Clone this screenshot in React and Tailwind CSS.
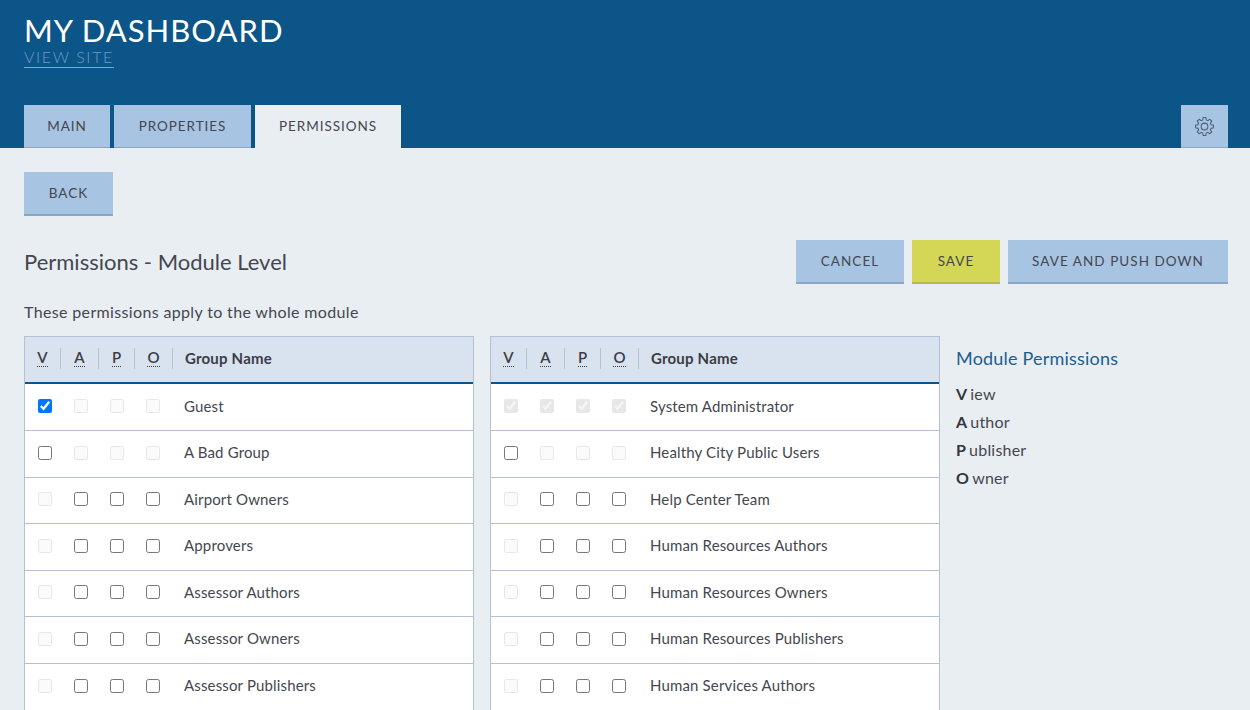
import React from "react";

const left = [
  { name: "Guest", v: true, locked: "apo" },
  { name: "A Bad Group", locked: "apo" },
  { name: "Airport Owners", locked: "v" },
  { name: "Approvers", locked: "v" },
  { name: "Assessor Authors", locked: "v" },
  { name: "Assessor Owners", locked: "v" },
  { name: "Assessor Publishers", locked: "v" },
];

const right = [
  { name: "System Administrator", all: true },
  { name: "Healthy City Public Users", locked: "apo" },
  { name: "Help Center Team", locked: "v" },
  { name: "Human Resources Authors", locked: "v" },
  { name: "Human Resources Owners", locked: "v" },
  { name: "Human Resources Publishers", locked: "v" },
  { name: "Human Services Authors", locked: "v" },
];

const Gear = () => (
  <svg width="21" height="21" viewBox="0 0 20 20" fill="none" stroke="#4a5f78" strokeWidth="1">
    <circle cx="10" cy="10" r="3.2" />
    <path d="M8.7 1.5h2.6l.4 2.3 1.5.6 1.9-1.3 1.8 1.8-1.3 1.9.6 1.5 2.3.4v2.6l-2.3.4-.6 1.5 1.3 1.9-1.8 1.8-1.9-1.3-1.5.6-.4 2.3H8.7l-.4-2.3-1.5-.6-1.9 1.3-1.8-1.8 1.3-1.9-.6-1.5-2.3-.4V8.7l2.3-.4.6-1.5-1.3-1.9 1.8-1.8 1.9 1.3 1.5-.6z" strokeLinejoin="round" />
  </svg>
);

const Button = ({ children, className }) => (
  <button className={`h-11 flex items-center justify-center text-[13.5px] tracking-[1.05px] text-[#44474f] border-b-2 ${className}`}>
    {children}
  </button>
);

const Tab = ({ children, className }) => (
  <div className={`h-[43px] flex items-center justify-center text-[13.5px] tracking-[0.95px] text-[#44474f] ${className}`}>
    {children}
  </div>
);

const Head = ({ children, className }) => (
  <div className={`flex items-center justify-center h-[21px] border-r border-[#b4c3d4] ${className}`}>
    <span className="font-semibold text-[15px] leading-[17px] text-[#3a3d44] border-b border-dotted border-[#3a3d44]">{children}</span>
  </div>
);

const Box = ({ checked, disabled }) => (
  <div className="w-9 flex justify-center">
    <input type="checkbox" readOnly checked={!!checked} disabled={!!disabled} className="w-[14px] h-[14px] disabled:opacity-50" />
  </div>
);

const Row = ({ row }) => {
  const locked = row.locked || "";
  return (
    <div className="h-[46.5px] flex items-center bg-white border-b last:border-b-0 border-[#b1c1d3] pl-[2px] pb-[2px]">
      <Box checked={row.v || row.all} disabled={row.all || locked.includes("v")} />
      <Box checked={row.all} disabled={row.all || locked.includes("a")} />
      <Box checked={row.all} disabled={row.all || locked.includes("p")} />
      <Box checked={row.all} disabled={row.all || locked.includes("o")} />
      <span className="ml-[13px] -mt-[1px] text-[15px] tracking-[0.15px] text-[#44474f]">{row.name}</span>
    </div>
  );
};

const Table = ({ rows }) => (
  <div className="w-[450px] border-x border-t border-[#b1c1d3]">
    <div className="h-[47px] flex items-center bg-[#d9e3ef] border-b-2 border-[#0b5588] pb-[3px]">
      <Head className="w-9">V</Head>
      <Head className="w-[38px]">A</Head>
      <Head className="w-9">P</Head>
      <Head className="w-[38px]">O</Head>
      <span className="ml-[12px] font-bold text-[15px] tracking-[0.2px] text-[#3a3d44]">Group Name</span>
    </div>
    <div className="pt-[0.5px] bg-white">
      {rows.map((row) => (
        <Row key={row.name} row={row} />
      ))}
    </div>
  </div>
);

export default function App() {
  return (
    <div className="h-[710px] overflow-hidden bg-[#e9eef3] font-['Lato','Liberation_Sans',sans-serif]">
      <header className="h-[148px] bg-[#0b5588] pl-[24px] pr-[22px] flex flex-col">
        <h1 className="mt-[12px] text-[31px] leading-[37px] tracking-[1px] text-white">MY DASHBOARD</h1>
        <div className="-mt-[4px]">
          <a className="inline-block font-light text-[16px] leading-[18px] tracking-[1.6px] text-[#6a9cc2] border-b border-[#7fa5c4] pb-[1px]">VIEW SITE</a>
        </div>
        <div className="mt-auto flex justify-between">
          <div className="flex gap-1">
            <Tab className="w-[86px] bg-[#a7c4e2] border-b border-[#8aa5c2]">MAIN</Tab>
            <Tab className="w-[137px] bg-[#a7c4e2] border-b border-[#8aa5c2]">PROPERTIES</Tab>
            <Tab className="w-[146px] bg-[#e9eef3]">PERMISSIONS</Tab>
          </div>
          <div className="w-[47px] h-[43px] flex items-center justify-center bg-[#a7c4e2] border-b border-[#8aa5c2]">
            <Gear />
          </div>
        </div>
      </header>
      <main className="pl-[24px] pr-[22px] pt-[24px]">
        <Button className="w-[89px] bg-[#a7c4e2] border-[#8aa5c2]">BACK</Button>
        <div className="mt-6 flex items-center justify-between">
          <h2 className="text-[22px] -mt-[2px] text-[#44474f]">Permissions - Module Level</h2>
          <div className="flex gap-2">
            <Button className="w-[108px] bg-[#a7c4e2] border-[#8aa5c2]">CANCEL</Button>
            <Button className="w-[88px] bg-[#d4d755] border-[#b5b84a]">SAVE</Button>
            <Button className="w-[220px] bg-[#a7c4e2] border-[#8aa5c2]">SAVE AND PUSH DOWN</Button>
          </div>
        </div>
        <p className="mt-[17px] h-[35px] text-[16px] tracking-[0.35px] leading-[22px] text-[#44474f]">These permissions apply to the whole module</p>
        <div className="flex gap-4">
          <Table rows={left} />
          <Table rows={right} />
          <aside className="pt-[10px]">
            <h3 className="text-[18px] tracking-[0.2px] leading-[24px] text-[#1a5f90]">Module Permissions</h3>
            <ul className="mt-[10px] text-[16px] tracking-[0.2px] text-[#44474f]">
              <li className="h-7 flex items-center"><b className="mr-[3px] text-[#33363d]">V</b>iew</li>
              <li className="h-7 flex items-center"><b className="mr-[3px] text-[#33363d]">A</b>uthor</li>
              <li className="h-7 flex items-center"><b className="mr-[3px] text-[#33363d]">P</b>ublisher</li>
              <li className="h-7 flex items-center"><b className="mr-[3px] text-[#33363d]">O</b>wner</li>
            </ul>
          </aside>
        </div>
      </main>
    </div>
  );
}
